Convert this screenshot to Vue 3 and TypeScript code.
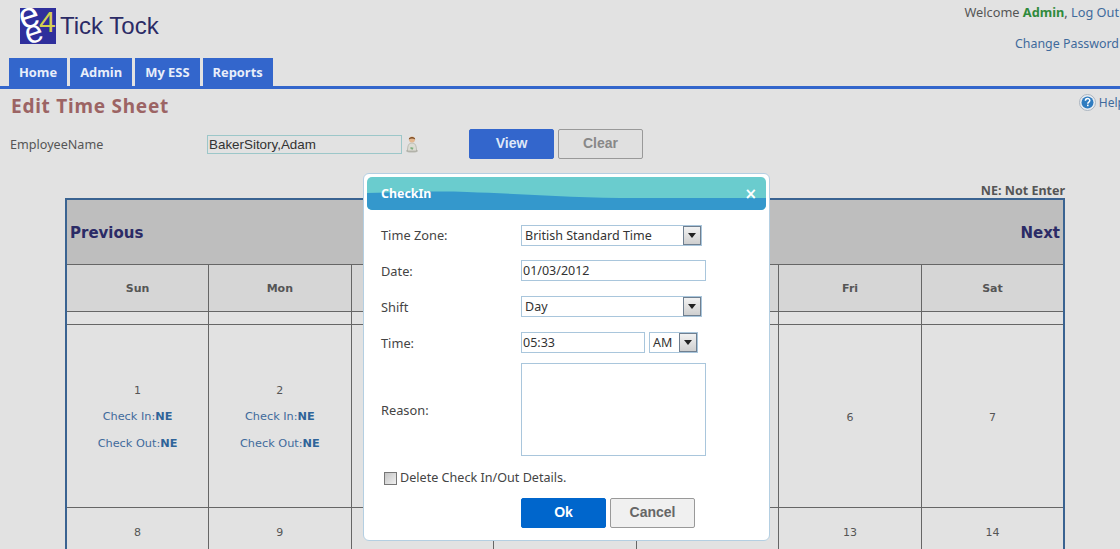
<template>
  <div class="page">
    <header class="top">
      <div class="brand">
        <svg class="logo" width="36" height="36" viewBox="0 0 36 36">
          <rect width="36" height="36" fill="#2f2f9c" />
          <text x="19" y="24" class="logo-four">4</text>
          <text x="0" y="19" class="logo-e" transform="rotate(-18 10 12)">e</text>
          <text x="6" y="34" class="logo-e logo-e-low" transform="rotate(-18 16 28)">e</text>
        </svg>
        <span class="brand-name">Tick Tock</span>
      </div>
      <div class="account">
        <div>Welcome <b class="admin">Admin</b>, <a>Log Out</a></div>
        <div class="change"><a>Change Password</a></div>
      </div>
    </header>

    <nav class="tabs">
      <a v-for="t in tabs" :key="t" class="tab">{{ t }}</a>
    </nav>

    <div class="title-row">
      <h1>Edit Time Sheet</h1>
      <a class="help">
        <svg width="17" height="17" viewBox="0 0 17 17">
          <circle cx="8.5" cy="8.5" r="8" fill="#e8edf2" stroke="#aab4bf" />
          <circle cx="8.5" cy="8.5" r="6" fill="#2f7cc0" />
          <path d="M6.4 6.800c0-3 4.400-3 4.400-.3 0 1.600-2 1.500-2 3.200" fill="none" stroke="#fff" stroke-width="1.500" />
          <rect x="8" y="10.600" width="1.600" height="1.600" fill="#fff" />
        </svg>
        <span>Help</span>
      </a>
    </div>

    <div class="filter">
      <label class="filter-label">EmployeeName</label>
      <input class="employee" value="BakerSitory,Adam" />
      <svg class="person" width="14" height="18" viewBox="0 0 14 18">
        <ellipse cx="7" cy="16" rx="6" ry="1.600" fill="#b8b8b0" />
        <path d="M2.500 16c0-6 1.500-8 4.500-8s4.500 2 4.500 8z" fill="#dcdcd4" stroke="#a5a59b" stroke-width=".6" />
        <path d="M5.500 12l3 .8-.8 2-2.200-.8z" fill="#7fae7f" />
        <circle cx="7" cy="4.500" r="3" fill="#e3b78f" />
        <path d="M3.800 4.500C3.500 1 10.500 1 10.200 4.500 8.500 3 5.500 3 3.800 4.500z" fill="#7a4a22" />
      </svg>
      <button class="btn btn-view">View</button>
      <button class="btn btn-clear">Clear</button>
    </div>

    <div class="legend">NE: Not Enter</div>

    <table class="calendar">
      <thead>
        <tr class="month-row">
          <th colspan="7">
            <div class="month-nav">
              <a>Previous</a>
              <a>Next</a>
            </div>
          </th>
        </tr>
        <tr class="day-row">
          <th v-for="d in days" :key="d">{{ d }}</th>
        </tr>
      </thead>
      <tbody>
        <tr class="spacer-row">
          <td v-for="d in days" :key="d"></td>
        </tr>
        <tr v-for="(week, i) in weeks" :key="i" :class="i === 0 ? 'week-tall' : 'week'">
          <td v-for="c in week" :key="c.day">
            <div>{{ c.day }}</div>
            <template v-if="c.entries">
              <div class="entry">Check In:<b>NE</b></div>
              <div class="entry">Check Out:<b>NE</b></div>
            </template>
          </td>
        </tr>
      </tbody>
    </table>

    <section class="dialog">
      <div class="dialog-head">
        <svg class="wave" viewBox="0 0 400 33" preserveAspectRatio="none">
          <path d="M0 16C40 15 70 14 100 15c60 2 110 6 170 6 50 0 90 0 130 0v12H0z" fill="#3498cc" />
        </svg>
        <span class="dialog-title">CheckIn</span>
        <span class="dialog-close">×</span>
      </div>
      <div class="form">
        <label>Time Zone:</label>
        <div class="select select-wide">
          <span>British Standard Time</span><i class="arrow"></i>
        </div>
        <label>Date:</label>
        <input class="field field-wide" value="01/03/2012" />
        <label>Shift</label>
        <div class="select select-wide">
          <span>Day</span><i class="arrow"></i>
        </div>
        <label>Time:</label>
        <div class="time">
          <input class="field field-time" value="05:33" />
          <div class="select select-ampm">
            <span>AM</span><i class="arrow"></i>
          </div>
        </div>
        <label class="reason-label">Reason:</label>
        <textarea class="reason"></textarea>
      </div>
      <label class="delete">
        <span class="check"></span>
        Delete Check In/Out Details.
      </label>
      <div class="actions">
        <button class="btn btn-ok">Ok</button>
        <button class="btn btn-cancel">Cancel</button>
      </div>
    </section>
  </div>
</template>

<script setup lang="ts">
interface Cell {
  day: number
  entries: boolean
}

const tabs = ['Home', 'Admin', 'My ESS', 'Reports']
const days = ['Sun', 'Mon', 'Tue', 'Wed', 'Thu', 'Fri', 'Sat']

const weeks: Cell[][] = [0, 1].map((w) =>
  days.map((_, i) => ({
    day: w * 7 + i + 1,
    entries: w === 0 && i < 5,
  })),
)
</script>

<style>
html,
body {
  margin: 0;
  background: #e2e2e2;
}
</style>

<style scoped>
.page {
  position: relative;
  width: 1120px;
  height: 549px;
  overflow: hidden;
  background: #e2e2e2;
  color: #555;
  font-family: "Noto Sans", "Liberation Sans", sans-serif;
  font-size: 12px;
}
.top {
  display: flex;
  justify-content: space-between;
  height: 58px;
}
.brand {
  display: flex;
  align-items: center;
  gap: 4px;
  height: 36px;
  padding: 8px 0 0 20px;
}
.logo {
  overflow: visible;
}
.logo-e {
  font-family: "Liberation Sans", sans-serif;
  font-size: 36px;
  fill: #fff;
}
.logo-e-low {
  font-size: 32px;
}
.logo-four {
  font-family: "Liberation Sans", sans-serif;
  font-size: 30px;
  fill: #d4d050;
}
.brand-name {
  font-family: "Liberation Sans", sans-serif;
  font-size: 24px;
  color: #2b2b66;
}
.account {
  padding: 3px 1px 0 0;
  text-align: right;
  font-size: 12.75px;
  line-height: 18px;
}
.account a {
  color: #3f6a9c;
}
.admin {
  color: #2f8a3c;
}
.change {
  margin-top: 14px;
  font-size: 12.4px;
}
.tabs {
  display: flex;
  gap: 3px;
  height: 28px;
  padding-left: 9px;
  border-bottom: 3px solid #3366cc;
}
.tab {
  padding: 0 10px;
  background: #3366cc;
  color: #e8eefa;
  font-family: "Open Sans", sans-serif;
  font-size: 12.9px;
  font-weight: 700;
  line-height: 28px;
}
.title-row {
  display: flex;
  justify-content: space-between;
  height: 40px;
}
h1 {
  margin: 4px 0 0 11px;
  color: #9c6464;
  font-family: "Noto Sans", sans-serif;
  font-size: 19px;
  font-weight: 700;
  letter-spacing: 0.75px;
  line-height: 26px;
}
.help {
  display: flex;
  gap: 3px;
  align-items: center;
  height: 17px;
  margin: 5px -5px 0 0;
  color: #3f6a9c;
  font-size: 12px;
}
.filter {
  display: flex;
  align-items: center;
  height: 30px;
  padding-left: 10px;
}
.filter-label {
  width: 197px;
  font-size: 12.6px;
}
.employee {
  box-sizing: border-box;
  width: 195px;
  height: 19px;
  padding: 0 1px;
  border: 1px solid #9cc7c9;
  background: #e2e2e2;
  color: #333;
  font: 13.4px "Liberation Sans", sans-serif;
  outline: none;
}
.person {
  margin: 0 50px 0 3px;
}
.btn {
  box-sizing: border-box;
  width: 85px;
  height: 30px;
  padding: 0 0 2px;
  border-radius: 2px;
  font-family: "Liberation Sans", sans-serif;
  font-size: 14px;
  font-weight: 700;
}
.btn-view {
  border: 1px solid #3366cc;
  background: #3366cc;
  color: #dfe8f8;
}
.btn-clear {
  margin-left: 4px;
  border: 1px solid #999;
  background: #e0e0e0;
  color: #888;
}
.legend {
  height: 16px;
  margin: 23px 55px 0 0;
  color: #555;
  font-size: 12.5px;
  font-weight: 700;
  line-height: 18px;
  text-align: right;
}
.calendar {
  box-sizing: border-box;
  width: 1000px;
  margin: 0 0 0 65px;
  border-collapse: collapse;
  table-layout: fixed;
  border: 2px solid #3a6391;
  font-family: "DejaVu Sans", sans-serif;
  font-size: 11px;
}
.month-row th {
  height: 64px;
  padding: 0;
  background: #bebebe;
}
.month-nav {
  display: flex;
  justify-content: space-between;
  padding: 2px 3px 0 3px;
  color: #2b2b66;
  font-size: 15px;
  font-weight: 700;
}
.day-row th {
  height: 46px;
  padding: 0;
  border: 1px solid #666;
  background: #d6d6d6;
  color: #555;
  font-size: 11px;
}
td {
  padding: 0;
  border: 1px solid #666;
  text-align: center;
  color: #555;
}
.spacer-row td {
  height: 12px;
}
.week-tall td {
  box-sizing: border-box;
  height: 183px;
  padding-top: 2px;
}
.week td {
  height: 48px;
}
.entry {
  margin-top: 13px;
  color: #3f6a9c;
  font-size: 11.3px;
  line-height: 14px;
}
.entry b {
  color: #2f6499;
}
.dialog {
  position: absolute;
  top: 173px;
  left: 363px;
  box-sizing: border-box;
  width: 407px;
  height: 368px;
  padding: 3px;
  border: 1px solid #b4cfe2;
  border-radius: 6px;
  background: #fff;
}
.dialog-head {
  position: relative;
  display: flex;
  justify-content: space-between;
  align-items: center;
  height: 33px;
  padding: 0 9px 0 14px;
  border-radius: 5px;
  overflow: hidden;
  background: #6accce;
  color: #fff;
  font-size: 12.4px;
  font-weight: 700;
}
.wave {
  position: absolute;
  inset: 0;
  width: 100%;
  height: 100%;
}
.dialog-title,
.dialog-close {
  position: relative;
}
.dialog-close {
  font-family: "DejaVu Sans", sans-serif;
  font-size: 15px;
}
.form {
  display: grid;
  grid-template-columns: 140px 1fr;
  grid-template-rows: 20px 21px 21px 21px 88px;
  row-gap: 15px;
  align-items: center;
  margin: 15px 0 0 14px;
  font-size: 12.5px;
}
.form label {
  color: #444;
  font-size: 12.8px;
}
.select {
  box-sizing: border-box;
  display: flex;
  justify-content: space-between;
  align-items: stretch;
  height: 21px;
  padding: 0 0 0 3px;
  border: 1px solid #a9c6dc;
  color: #333;
  line-height: 19px;
  background: #fff;
}
.select-wide {
  width: 181px;
}
.select-ampm {
  width: 49px;
}
.arrow {
  position: relative;
  box-sizing: border-box;
  width: 18px;
  border: 1px solid #6f7f90;
  background: linear-gradient(#f2f2f2, #cfcfcf);
}
.arrow::after {
  content: "";
  position: absolute;
  top: 6px;
  left: 4px;
  border: 4px solid transparent;
  border-top: 5px solid #222;
  border-bottom: 0;
}
.field {
  box-sizing: border-box;
  height: 21px;
  padding: 0 1px;
  border: 1px solid #a9c6dc;
  color: #333;
  font: 12.5px "Noto Sans", sans-serif;
  outline: none;
}
.field-wide {
  width: 185px;
}
.field-time {
  width: 124px;
}
.time {
  display: flex;
  gap: 4px;
}
.reason-label {
  margin-top: -5px;
}
.reason {
  box-sizing: border-box;
  display: block;
  width: 185px;
  height: 93px;
  margin: -5px 0 0;
  padding: 0;
  border: 1px solid #a9c6dc;
  resize: none;
  outline: none;
}
.delete {
  display: flex;
  align-items: center;
  gap: 3px;
  margin: 14px 0 0 17px;
  color: #444;
  font-size: 12.6px;
  line-height: 16px;
}
.check {
  box-sizing: border-box;
  width: 13px;
  height: 13px;
  border: 1px solid #777;
  background: linear-gradient(135deg, #c4c4c4, #f0f0f0);
}
.actions {
  display: flex;
  gap: 4px;
  margin: 12px 0 0 154px;
}
.btn-ok {
  border: 1px solid #0066cc;
  background: #0066cc;
  color: #fff;
}
.btn-cancel {
  border: 1px solid #999;
  background: #f0f0f0;
  color: #666;
}
</style>
